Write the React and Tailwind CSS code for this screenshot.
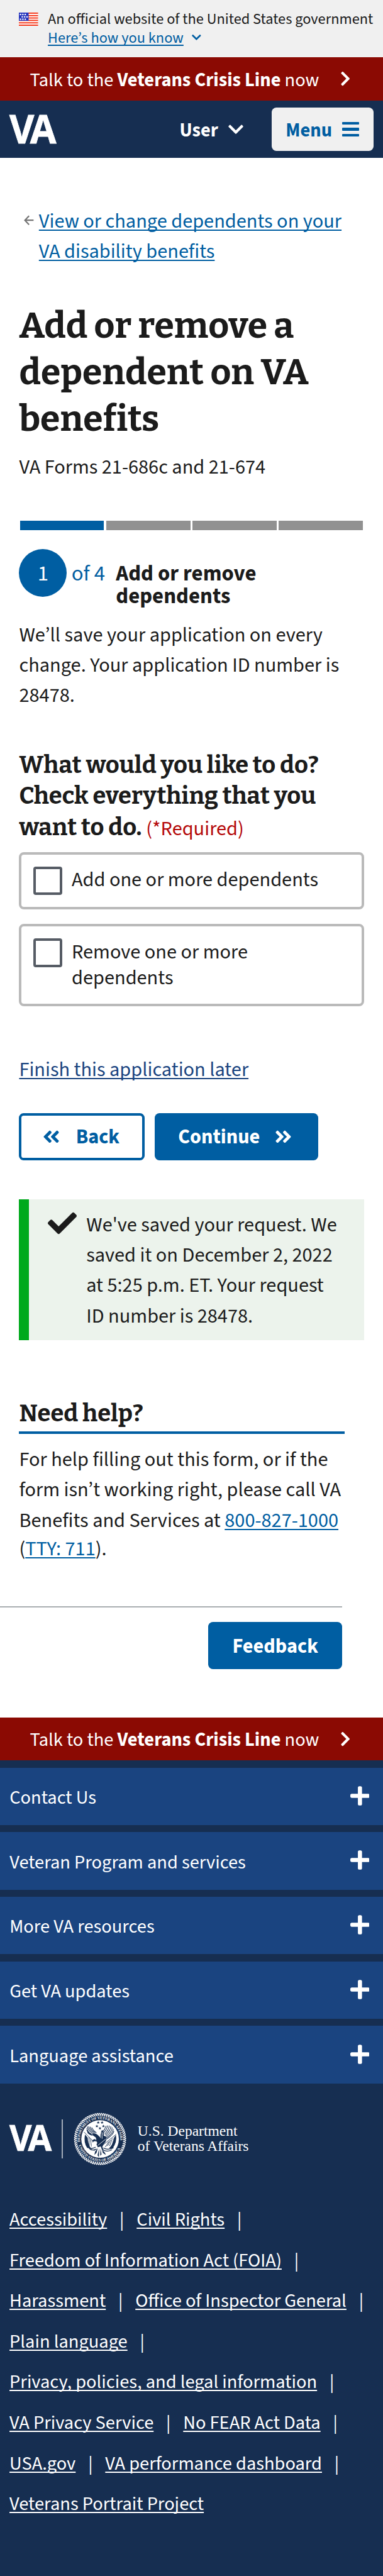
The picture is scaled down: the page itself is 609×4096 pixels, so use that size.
import React from "react";
import {
  FaAngleDoubleLeft,
  FaAngleDoubleRight,
  FaCheck,
  FaChevronDown,
  FaChevronRight,
  FaPlus,
} from "react-icons/fa";

function CrisisLine() {
  return (
    <div className="flex h-[68.4px] items-center bg-[#8b0a03] pl-[47.6px] pr-[51.4px] text-[30.45px] text-white">
      <span className="pt-[4px] leading-[43px]">
        Talk to the <b className="font-bold">Veterans Crisis Line</b> now
      </span>
      <FaChevronRight className="ml-auto h-[26.2px] w-[16.4px]" />
    </div>
  );
}

function Flag() {
  const rows = [
    [2.5, 6.3, 10.1],
    [5.3, 9.1, 12.9],
    [2.5, 6.3, 10.1],
  ];
  return (
    <svg className="h-[21px] w-[30.6px]" viewBox="0 0 30.6 21" preserveAspectRatio="none">
      <rect width="30.6" height="21" fill="#fff" />
      {[0, 3.9, 7.7, 11.5, 15.4, 19.2].map((y) => (
        <rect key={y} y={y} width="30.6" height="1.8" fill="#f52c0c" />
      ))}
      <rect width="15.5" height="13" fill="#2534bd" />
      {rows.map((xs, r) =>
        xs.map((x) => <rect key={r + "-" + x} x={x - 1} y={1.9 + r * 3.8} width="2.2" height="2.2" fill="#fff" />)
      )}
    </svg>
  );
}

function VaMark({ className }) {
  return (
    <svg className={"overflow-visible " + className} viewBox="0 0 75 46" preserveAspectRatio="none">
      <text
        x="0 34.3"
        y="45.6"
        fill="#fff"
        stroke="#fff"
        strokeWidth="0.8"
        transform="scale(0.955 1)"
        className="font-['Open_Sans',sans-serif] text-[63.5px] font-bold"
      >
        VA
      </text>
    </svg>
  );
}

const star = (cx, cy, r) =>
  Array.from({ length: 10 }, (_, i) => {
    const a = (Math.PI / 5) * i - Math.PI / 2;
    const q = i % 2 ? r * 0.42 : r;
    return `${(cx + q * Math.cos(a)).toFixed(1)},${(cy + q * Math.sin(a)).toFixed(1)}`;
  }).join(" ");

function Seal() {
  const navy = "#162e51";
  return (
    <svg className="h-[82.3px] w-[82.3px] shrink-0 overflow-visible" viewBox="19 20 388 388">
      <defs>
        <path id="seal-top" d="M63.5 236 A151 151 0 1 1 362.5 236" />
        <path id="seal-bottom" d="M52 262 A169 169 0 0 0 371 274" />
      </defs>
      {Array.from({ length: 76 }, (_, i) => (
        <path
          key={i}
          d="M207 22 Q217 26 219 38"
          stroke="#fff"
          strokeWidth="8"
          strokeLinecap="round"
          fill="none"
          transform={`rotate(${(i * 360) / 76} 213 214)`}
        />
      ))}
      <circle cx="213" cy="214" r="141" fill="#fff" />
      <text fill="#fff" className="font-['Liberation_Serif',serif] text-[27px] font-bold">
        <textPath href="#seal-top" textLength="506" lengthAdjust="spacingAndGlyphs">
          DEPARTMENT OF VETERANS AFFAIRS
        </textPath>
      </text>
      <text fill="#fff" className="font-['Liberation_Serif',serif] text-[27px] font-bold">
        <textPath href="#seal-bottom" textLength="405" lengthAdjust="spacingAndGlyphs">
          UNITED STATES OF AMERICA
        </textPath>
      </text>
      {[
        [199, 91],
        [228, 91],
        [189, 118],
        [238, 118],
        [212, 134],
      ].map(([x, y]) => (
        <polygon key={x} points={star(x, y, 12)} fill={navy} />
      ))}
      <g stroke={navy} fill="none" strokeLinecap="round">
        <path
          strokeWidth="5"
          d="M117 122 Q126 152 152 168 M127 121 Q136 150 163 166 M139 124 Q147 148 174 166 M151 129 Q160 150 184 167 M113 136 Q122 164 146 176 M114 150 Q126 174 150 182 M120 166 Q134 184 156 186"
        />
        <path
          strokeWidth="5"
          d="M268 114 Q266 142 238 168 M281 115 Q280 144 248 176 M293 120 Q294 148 254 184 M303 129 Q306 156 258 194 M312 141 Q310 168 262 204 M316 156 Q312 178 266 212 M257 118 Q250 140 232 162"
        />
        <path strokeWidth="4" d="M94 163 L162 232 M332 180 L258 240 L222 268" />
        <path
          strokeWidth="6"
          d="M132 284 Q150 306 184 290 M124 272 Q142 296 178 276 M236 296 Q262 314 300 296 M240 282 Q270 300 312 280"
        />
        <path
          strokeWidth="5"
          strokeDasharray="4 6"
          d="M130 200 L132 262 M142 214 L148 270 M318 206 L302 264 M304 212 L284 266 M290 224 L268 268 M276 236 L254 272"
        />
      </g>
      <path
        fill={navy}
        d="M150 174 Q176 164 196 184 L212 200 Q214 160 230 146 Q244 160 240 190 Q262 192 262 214 Q256 236 240 252 L230 272 L240 300 L226 292 L218 270 L196 276 L186 254 Q200 240 178 228 Q190 214 178 200 Q160 190 150 174 Z"
      />
      <path
        fill={navy}
        d="M100 180 Q88 240 116 280 L146 286 Q122 256 120 204 Z M332 184 Q342 236 306 286 L280 284 Q314 250 320 200 Z"
      />
      <path fill={navy} d="M154 226 Q160 214 178 214 L180 232 L166 230 L158 240 Z" />
      <path
        fill={navy}
        d="M196 282 L186 318 L170 334 L176 308 Z M206 284 L204 350 L194 336 Z M216 286 L224 330 L214 340 Z M226 290 L250 318 L256 334 L234 318 Z M184 286 L168 304 L164 296 Z"
      />
      <path
        stroke="#fff"
        strokeWidth="4"
        fill="none"
        d="M222 160 Q214 184 216 206 M232 164 Q226 186 228 212 M196 262 L256 214"
      />
    </svg>
  );
}

const accordion = [
  "Contact Us",
  "Veteran Program and services",
  "More VA resources",
  "Get VA updates",
  "Language assistance",
];

const links = [
  ["Accessibility", "Civil Rights"],
  ["Freedom of Information Act (FOIA)"],
  ["Harassment", "Office of Inspector General"],
  ["Plain language"],
  ["Privacy, policies, and legal information"],
  ["VA Privacy Service", "No FEAR Act Data"],
  ["USA.gov", "VA performance dashboard"],
  ["Veterans Portrait Project"],
];

const link = "underline decoration-[1.5px] underline-offset-[3px] [text-decoration-skip-ink:none]";

function Option({ children, className }) {
  return (
    <label className={"flex items-start rounded-[8px] border-[4px] border-[#bababa] pl-[18.7px] pt-[19px] " + className}>
      <span className="size-[45.7px] shrink-0 rounded-[4px] border-[4px] border-[#565c65]" />
      <span className="ml-[15.2px] mt-[1.6px] leading-[41.6px]">{children}</span>
    </label>
  );
}

export default function App() {
  return (
    <div className="h-[4096px] w-[609px] overflow-hidden whitespace-nowrap bg-white font-['Source_Sans_3','Source_Sans_Pro','Noto_Sans_CJK_SC',sans-serif] text-[32.35px] text-[#1b1b1b]">
      <div className="flex h-[91.35px] items-start bg-[#f0f0f0] pl-[30.3px] text-[24.36px] leading-[30px]">
        <div className="pt-[19.5px]">
          <Flag />
        </div>
        <div className="ml-[15.2px] pt-[15.6px]">
          <p>An official website of the United States government</p>
          <p className="flex items-center text-[#005ea2]">
            <span className={link}>Here’s how you know</span>
            <FaChevronDown className="mb-[2px] ml-[13.2px] h-[16.8px] w-[14.7px]" />
          </p>
        </div>
      </div>
      <CrisisLine />
      <header className="flex h-[91.45px] items-center bg-[#162e51] px-[15.1px] text-[30.45px] font-bold text-white">
        <VaMark className="h-[46px] w-[75px]" />
        <span className="ml-auto pt-[4.4px] leading-[43px]">User</span>
        <FaChevronDown className="ml-[16.5px] h-[27.4px] w-[24px]" />
        <button className="ml-[44.6px] flex h-[68.5px] w-[162px] items-center rounded-[7.6px] bg-[#f0f0f0] pl-[22.4px] text-[#005ea2]">
          <span className="pt-[4.4px] leading-[43px]">Menu</span>
          <span className="ml-[15.8px] flex flex-col gap-[5px]">
            <i className="h-[4.6px] w-[27px] rounded-[1px] bg-[#005ea2]" />
            <i className="h-[4.6px] w-[27px] rounded-[1px] bg-[#005ea2]" />
            <i className="h-[4.6px] w-[27px] rounded-[1px] bg-[#005ea2]" />
          </span>
        </button>
      </header>

      <main className="px-[30.45px]">
        <nav className="mt-[76.5px] flex items-start pl-[7.6px] leading-[48px] text-[#005ea2]">
          <svg className="mt-[14.6px] h-[16px] w-[16px]" viewBox="0 0 16 16" fill="none" stroke="#757575" strokeWidth="2.2">
            <path d="M15.4 8.2H1.6M8.2 1.2L1.6 8.2L8.2 15.2" />
          </svg>
          <a className={"ml-[7.8px] " + link}>
            View or change dependents on your
            <br />
            VA disability benefits
          </a>
        </nav>
        <h1 className="mt-[57px] font-['Bitter','DejaVu_Serif_Condensed',serif] text-[57.09px] font-bold leading-[74.1px]">
          Add or remove a
          <br />
          dependent on VA
          <br />
          benefits
        </h1>
        <p className="mt-[16.5px] leading-[48px]">VA Forms 21-686c and 21-674</p>

        <div className="ml-[1.8px] mr-[1.9px] mt-[60.3px] grid h-[15.1px] grid-cols-4 gap-[3.8px]">
          <i className="bg-[#005ea2]" />
          <i className="bg-[#919191]" />
          <i className="bg-[#919191]" />
          <i className="bg-[#919191]" />
        </div>
        <div className="mt-[30.6px] flex h-[93.3px] items-start text-[34.8px] leading-[36.2px]">
          <span className="flex size-[76px] justify-center rounded-full bg-[#005ea2] pt-[20.4px] text-white">1</span>
          <span className="ml-[7.4px] pt-[20.4px] text-[#005ea2]">of 4</span>
          <h2 className="ml-[17.2px] pt-[20.4px] font-bold">
            Add or remove
            <br />
            dependents
          </h2>
        </div>
        <p className="mt-[19.15px] leading-[48.3px]">
          We’ll save your application on every
          <br />
          change. Your application ID number is
          <br />
          28478.
        </p>

        <h3 className="mt-[60.95px] h-[148.2px] font-['Bitter','DejaVu_Serif_Condensed',serif] text-[38.06px] font-bold leading-[49.4px]">
          What would you like to do?
          <br />
          Check everything that you
          <br />
          want to do.{" "}
          <span className="font-['Source_Sans_3','Source_Sans_Pro','Noto_Sans_CJK_SC',sans-serif] text-[32.35px] font-normal leading-[0px] text-[#b50909]">
            (*Required)
          </span>
        </h3>
        <Option className="mt-[14.8px] h-[91.2px]">Add one or more dependents</Option>
        <Option className="mt-[23.3px] h-[130.8px]">
          Remove one or more
          <br />
          dependents
        </Option>

        <p className="mt-[76.7px] leading-[48px] text-[#1a4480]">
          <a className={link}>Finish this application later</a>
        </p>
        <div className="mt-[45.1px] flex h-[75.7px] gap-[15.2px] font-bold">
          <button className="flex w-[199.9px] items-center rounded-[7.6px] border-[4px] border-[#005ea2] pl-[34px] text-[#005ea2]">
            <FaAngleDoubleLeft className="h-[30.9px] w-[27px]" />
            <span className="ml-[25.2px] leading-[46px]">Back</span>
          </button>
          <button className="flex w-[260.6px] items-center rounded-[7.6px] bg-[#005ea2] pl-[37.7px] pr-[41.7px] text-white">
            <span className="leading-[46px]">Continue</span>
            <FaAngleDoubleRight className="ml-auto h-[30.9px] w-[27px]" />
          </button>
        </div>

        <div className="mt-[61.2px] flex h-[224.5px] items-start bg-[#ecf3ec]">
          <i className="h-full w-[15.3px] bg-[#00a91c]" />
          <FaCheck className="ml-[30.4px] mt-[15.1px] size-[46px]" />
          <p className="ml-[15.1px] pt-[17.1px] leading-[48.3px]">
            We've saved your request. We
            <br />
            saved it on December 2, 2022
            <br />
            at 5:25 p.m. ET. Your request
            <br />
            ID number is 28478.
          </p>
        </div>

        <section className="mt-[91.6px]">
          <h3 className="w-[517.6px] border-b-[4px] border-[#005ea2] pb-[3.8px] font-['Bitter','DejaVu_Serif_Condensed',serif] text-[38.06px] font-bold leading-[49.4px]">
            Need help?
          </h3>
          <p className="mt-[16.85px] leading-[48.5px]">
            For help filling out this form, or if the
            <br />
            form isn’t working right, please call VA
            <br />
            Benefits and Services at <a className={"text-[#005ea2] " + link}>800-827-1000</a>
          </p>
          <p className="-mt-[3px] leading-[48.5px]">
            (<a className={"text-[#005ea2] " + link}>TTY: 711</a>).
          </p>
        </section>
      </main>

      <div className="mt-[66px] h-[2px] w-[544.1px] bg-[#a9aeb1]" />
      <div className="mb-[76.4px] mt-[22.9px] flex justify-end pr-[64.9px]">
        <button className="h-[75.6px] w-[212.8px] rounded-[7.6px] bg-[#005ea2] pt-[3px] font-bold leading-[46px] text-white">
          Feedback
        </button>
      </div>

      <CrisisLine />
      <footer className="bg-[#162e51] pb-[90px] pt-[11.5px] text-[30.45px] text-white">
        <ul className="flex flex-col gap-[11.35px]">
          {accordion.map((t) => (
            <li key={t} className="flex h-[91.4px] items-center bg-[#1a4480] pl-[15.2px] pr-[21.8px]">
              <span className="pt-[4.6px] leading-[43px]">{t}</span>
              <FaPlus className="mb-[2px] ml-auto h-[35px] w-[30.7px]" />
            </li>
          ))}
        </ul>
        <div className="mt-[46.9px] flex h-[82.3px] items-center pl-[15.1px]">
          <VaMark className="mb-[2px] h-[41.4px] w-[67.6px]" />
          <i className="ml-[15.5px] h-[61.5px] w-[1.4px] bg-[#a3adba]" />
          <div className="ml-[18.4px]">
            <Seal />
          </div>
          <p className="ml-[18.6px] mt-px font-['Liberation_Serif',serif] text-[23.5px] leading-[23.9px]">
            U.S. Department
            <br />
            of Veterans Affairs
          </p>
        </div>
        <div className="mt-[55.9px]">
          {links.map((row, r) => (
            <div key={r} className="flex pl-[15.1px] leading-[64.6px]">
              {row.map((t) => (
                <React.Fragment key={t}>
                  <a className={link}>{t}</a>
                  {r < links.length - 1 && <span className="w-[47px] text-center">|</span>}
                </React.Fragment>
              ))}
            </div>
          ))}
        </div>
      </footer>
    </div>
  );
}
